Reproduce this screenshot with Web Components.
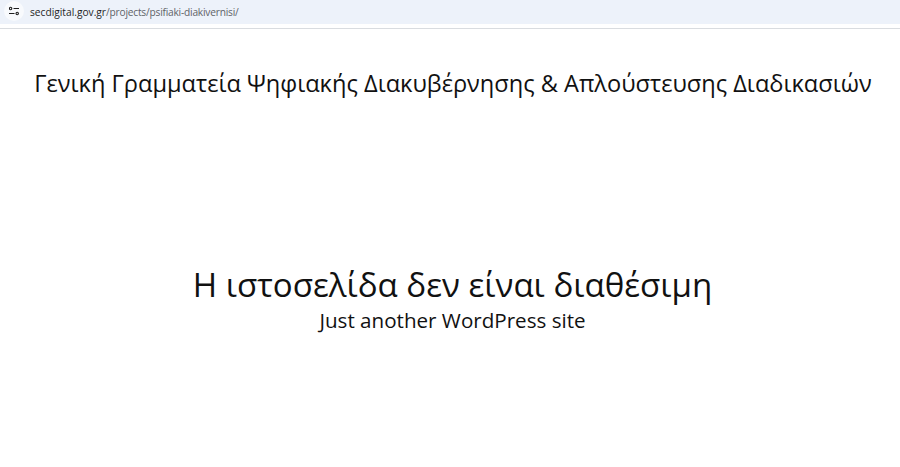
<!doctype html>
<html lang="el">
<head>
<meta charset="utf-8">
<title>secdigital.gov.gr</title>
<style>
  html, body { margin: 0; height: 100%; background: #fff; overflow: hidden }
  body { font-family: "Open Sans", "Noto Sans", sans-serif; color: #111; display: flex; flex-direction: column }
</style>
</head>
<body>
<url-bar host="secdigital.gov.gr" path="/projects/psifiaki-diakivernisi/"></url-bar>
<site-header>Γενική Γραμματεία Ψηφιακής Διακυβέρνησης &amp; Απλούστευσης Διαδικασιών</site-header>
<site-notice>
  <span slot="title">Η ιστοσελίδα δεν είναι διαθέσιμη</span>
  Just another WordPress site
</site-notice>
<script>
customElements.define('url-bar', class UrlBar extends HTMLElement {
  constructor () {
    super()
    const root = this.attachShadow({ mode: 'open' })
    root.innerHTML = `<style>
      :host {
        display: block;
        height: 29px;
        box-sizing: border-box;
        border-bottom: 1px solid #d9dce0;
        font: 10.2px "Open Sans", "Noto Sans", sans-serif;
        color: #5f6368
      }
      .bar {
        display: flex;
        align-items: center;
        gap: 6px;
        height: 24px;
        padding-left: 4px;
        background: #edf2fa
      }
      .chip {
        flex: none;
        display: flex;
        align-items: center;
        justify-content: center;
        width: 20px;
        height: 20px;
        margin-bottom: 2px;
        border-radius: 50%;
        background: #f8fafd
      }
      b { font-weight: 400; color: #1f1f1f }
      i { font-style: normal; letter-spacing: -0.22px }
    </style>
    <div class="bar">
      <span class="chip">
        <svg width="10" height="10" viewBox="0 0 10 10" fill="none" stroke="#1f1f1f" stroke-width="1.1">
          <path d="M4.5 2.5H10M0 7.5h5.5"/>
          <circle cx="1.6" cy="2.5" r="1.2"/>
          <circle cx="8.2" cy="7.5" r="1.2"/>
        </svg>
      </span>
      <span><b></b><i></i></span>
    </div>`
    root.querySelector('b').textContent = this.getAttribute('host')
    root.querySelector('i').textContent = this.getAttribute('path')
  }
})

customElements.define('site-header', class SiteHeader extends HTMLElement {
  constructor () {
    super()
    const root = this.attachShadow({ mode: 'open' })
    root.innerHTML = `<style>
      :host {
        display: block;
        padding: 39px 0 0 6px;
        text-align: center;
        font-size: 23.6px;
        line-height: 30px;
        white-space: nowrap
      }
    </style><slot></slot>`
  }
})

customElements.define('site-notice', class SiteNotice extends HTMLElement {
  constructor () {
    super()
    const root = this.attachShadow({ mode: 'open' })
    root.innerHTML = `<style>
      :host {
        display: flex;
        flex-direction: column;
        align-items: center;
        padding: 164px 0 0 5px;
        font-size: 20.6px;
        line-height: 26px
      }
      h1 {
        margin: 0;
        font-size: 33.1px;
        font-weight: 400;
        line-height: 45px
      }
    </style><h1><slot name="title"></slot></h1><div><slot></slot></div>`
  }
})
</script>
</body>
</html>
